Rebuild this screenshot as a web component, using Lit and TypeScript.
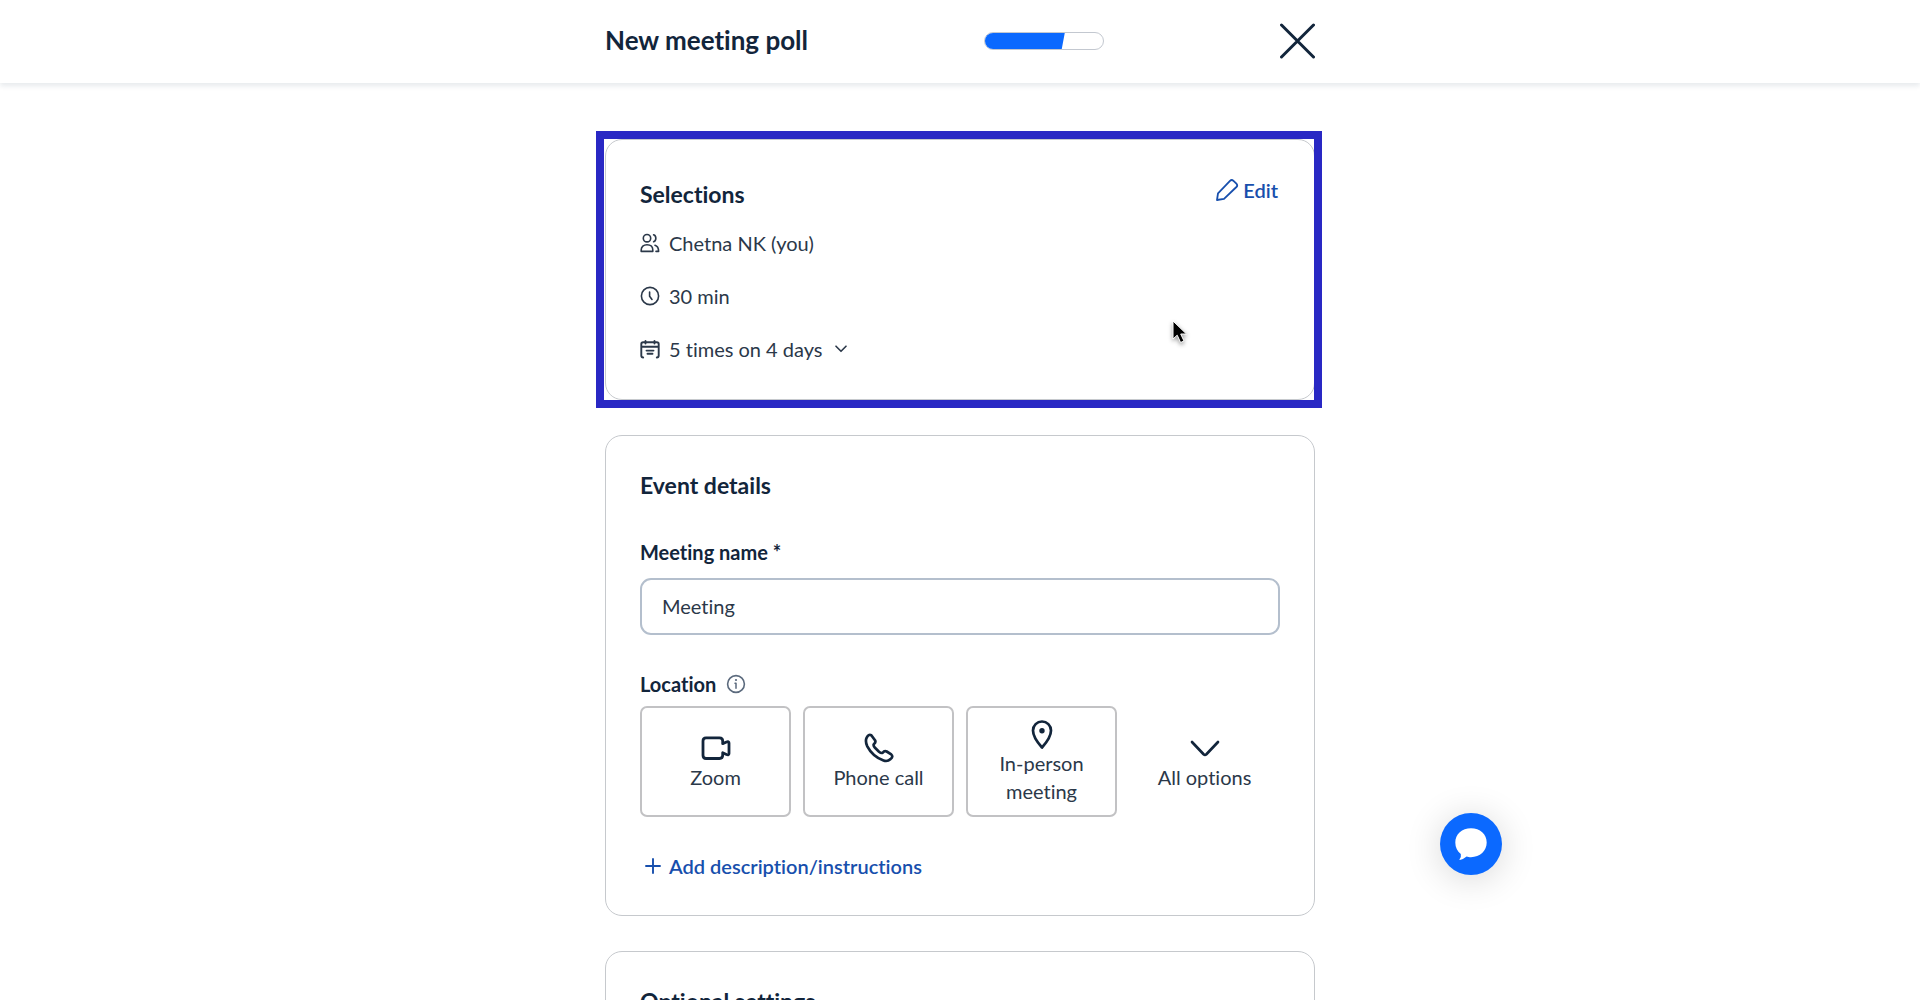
import { LitElement, html, css, svg } from "lit";
import { customElement, state } from "lit/decorators.js";

const icons = {
  close: svg`<svg class="icon" width="36" height="36" viewBox="0 0 36 36"><path d="M2.500 2 34.500 34M34.500 2 2.500 34" stroke-width="3"/></svg>`,
  edit: svg`<svg class="icon" width="24" height="24" viewBox="0 0 24 24"><path d="M2 22 3 15.4 15 2.8Q16.7 1.200 18.500 2.800L21.400 5.700Q23 7.400 21.400 9L9 20.800Z" stroke-width="1.8"/></svg>`,
  people: svg`<svg class="icon" width="20" height="20" viewBox="0 0 20 20"><circle cx="7" cy="5.200" r="3.700"/><path d="M1.200 18.400V17C1.200 13.700 3.600 11.800 7 11.800S12.800 13.700 12.800 17V18.400ZM13.600 1.700C16.600 2.700 16.600 7.700 13.600 8.700M15 12.200C17.700 13 18.600 15 18.600 18.400H16"/></svg>`,
  clock: svg`<svg class="icon" width="20" height="20" viewBox="0 0 20 20"><circle cx="10" cy="10" r="8.600"/><path d="M9.600 6V10.300L12 13.400"/></svg>`,
  calendar: svg`<svg class="icon" width="20" height="20" viewBox="0 0 20 20"><path d="M3.200 18.500Q1.300 18.500 1.300 16.500V5Q1.300 3.200 3.200 3.200H16.800Q18.700 3.200 18.700 5V16.500Q18.700 18.500 16.800 18.500M1.300 7.800H18.700M5.500 2V4.500M14.500 2V4.500M6.500 11.600H13.500M7.500 14.800H12.500" stroke-width="1.900"/></svg>`,
  down: svg`<svg class="icon" width="12" height="8" viewBox="0 0 12 8"><path d="M1 1.200 6 6.300 11 1.200"/></svg>`,
  info: svg`<svg class="icon" width="20" height="20" viewBox="0 0 20 20"><circle cx="10" cy="10" r="8.400"/><path d="M9 9.300H10V14.200" stroke-width="1.500"/><circle cx="10" cy="6" r="1.100" fill="currentColor" stroke="none"/></svg>`,
  video: svg`<svg class="icon" width="30" height="30" viewBox="0 0 30 30"><path d="M5 4.800H18.500Q21.700 4.800 21.700 8V10.700L25.500 9Q28 8 28 10V20.500Q28 22.500 25.500 21.500L21.700 19.800V22.300Q21.700 25.500 18.500 25.500H5Q2 25.500 2 22.300V8Q2 4.800 5 4.800Z" stroke-width="2.800"/></svg>`,
  phone: svg`<svg class="icon" width="30" height="30" viewBox="0 0 30 30"><path d="M2.600 4.800Q4.500.800 7.300 2.200L11 7.300Q12.200 9.300 9.800 11.200Q9 12.600 11 14.800L15 18.700Q17.300 20.600 18.700 19.700Q20.400 17.300 22.700 18.500L27.200 21.400Q29.600 23.700 26.600 26Q23.500 29 19.500 27.500Q8.500 23.300 3.300 13.300Q1 8.500 2.600 4.800Z" stroke-width="2.700"/></svg>`,
  pin: svg`<svg class="icon" width="30" height="30" viewBox="0 0 30 30"><path d="M15 28.500Q6 18.500 6 11.500A9 9 0 0 1 24 11.500Q24 18.500 15 28.500Z" stroke-width="2.700"/><circle cx="15" cy="11.800" r="2.700" fill="currentColor" stroke="none"/></svg>`,
  bigDown: svg`<svg class="icon" width="30" height="30" viewBox="0 0 30 30"><path d="M2 9 13.600 21.200Q15 22.500 16.400 21.200L28 9" stroke-width="2.700"/></svg>`,
  plus: svg`<svg class="icon" width="16" height="16" viewBox="0 0 16 16"><path d="M8 1V15M1 8H15" stroke-width="1.900"/></svg>`,
  chat: svg`<svg width="32" height="32" viewBox="0 0 32 32"><path fill="#fff" d="M16 .300C25 .300 31.700 6.200 31.700 14.600S25 29.200 16 29.200C14.200 29.200 13 29 11.600 28.500Q8 31.500 4.800 32Q4 31.600 4.700 30.900Q6.400 29 5.800 26C2.300 23.500.300 19.500.300 14.600.300 6.200 7 .300 16 .300Z"/></svg>`,
};

@customElement("app-root")
export class AppRoot extends LitElement {
  @state() private meetingName = "Meeting";

  static styles = css`
    :host { display: block; position: relative; height: 100vh; overflow: hidden; background: #fff;
      color: #12253b; font: 20px/28px Lato, "Open Sans", sans-serif; font-variant-ligatures: none; }
    * { box-sizing: border-box; }
    h1, h2, ul { margin: 0; padding: 0; }
    button { font: inherit; font-variant-ligatures: none; color: inherit; background: none; border: 0; padding: 0; cursor: pointer; }
    .icon { display: block; flex: none; fill: none; stroke: currentColor; stroke-width: 1.600; stroke-linecap: round; stroke-linejoin: round; }
    .column { width: 100%; max-width: 710px; margin: 0 auto; }
    .header { background: #fff; box-shadow: 0 3px 5px rgba(18, 45, 80, 0.1); }
    .bar { display: flex; justify-content: space-between; align-items: center; height: 83px; padding-bottom: 1px; }
    .title { font-size: 26px; line-height: 32px; font-weight: 700; padding-bottom: 3px; }
    .progress { width: 120px; height: 18px; border: 1px solid #c3c8d0; border-radius: 9px; overflow: hidden; }
    .fill { height: 100%; background: #0b69ff; clip-path: polygon(0 0, 100% 0, calc(100% - 3px) 100%, 0 100%); }
    .main { display: flex; flex-direction: column; gap: 35px; padding-top: 56px; }
    .card { position: relative; border: 1px solid #c6c9cd; border-radius: 17px; padding: 34px; }
    .heading { font-size: 23px; line-height: 30px; font-weight: 700; }
    .highlight { position: absolute; inset: -9px -8px -9px -10px; border: 8px solid #2928c4; pointer-events: none; }
    .top { display: flex; justify-content: space-between; align-items: start; padding-right: 2px; }
    .top .heading { padding-top: 5px; }
    .link { display: flex; align-items: center; gap: 6px; color: #174fad; font-weight: 600; }
    .top .link { padding-top: 2px; gap: 4px; }
    .list { list-style: none; display: flex; flex-direction: column; gap: 25px; padding: 20px 0 2px; }
    .row { display: flex; align-items: center; gap: 9px; color: #2b3849; }
    .toggle { display: flex; align-items: center; gap: 12px; }
    .label { display: block; font-weight: 700; padding-top: 38px; }
    .field { display: block; width: 100%; height: 57px; margin-top: 12px; padding: 0 20px 2px; border: 2px solid #b4bfcd;
      border-radius: 11px; background: #fff; color: #2b3849; font: inherit; font-variant-ligatures: none; outline: none; }
    .location { display: flex; align-items: center; gap: 10px; font-weight: 700; padding-top: 35px; }
    .info { color: #5b6a7d; }
    .tiles { display: grid; grid-template-columns: repeat(4, 1fr); gap: 12px; margin-top: 8px; }
    .tile { display: flex; flex-direction: column; align-items: center; justify-content: center; height: 111px; padding: 0 20px;
      border: 2px solid #c2c2c4; border-radius: 7px; color: #12253b; }
    .plain { border-color: transparent; }
    .text { color: #2b3849; }
    .add { margin: 35px 0 1px 5px; gap: 8px; }
    .chat { position: absolute; top: 813px; left: calc(50% + 480px); width: 62px; height: 62px; border-radius: 50%;
      display: grid; place-items: center; background: #0b69ff; box-shadow: 0 4px 36px rgba(0, 0, 0, 0.16); }
    .cursor { position: absolute; top: 180px; right: 126px; filter: drop-shadow(0 2px 2px rgba(0, 0, 0, 0.4)); }
  `;

  private tile(icon: unknown, label: string, extra = "") {
    return html`<button class="tile ${extra}" type="button">${icon}<span class="text">${label}</span></button>`;
  }

  render() {
    return html`
      <header class="header">
        <div class="column bar">
          <h1 class="title">New meeting poll</h1>
          <div class="progress" role="progressbar" aria-label="Progress" aria-valuenow="68">
            <div class="fill" style="width: 68%"></div>
          </div>
          <button class="close" type="button" aria-label="Close">${icons.close}</button>
        </div>
      </header>
      <main class="column main">
        <section class="card">
          <div class="top">
            <h2 class="heading">Selections</h2>
            <button class="link" type="button">${icons.edit}Edit</button>
          </div>
          <ul class="list">
            <li class="row">${icons.people}<span>Chetna NK (you)</span></li>
            <li class="row">${icons.clock}<span>30 min</span></li>
            <li class="row">${icons.calendar}<button class="toggle" type="button">5 times on 4 days ${icons.down}</button></li>
          </ul>
          <div class="highlight"></div>
          <svg class="cursor" width="16" height="24" viewBox="0 0 16 24">
            <path d="M1 1V19L5.200 15.200 8.600 22.500 12 21 8.700 14H14.500Z" fill="#000" stroke="#fff" stroke-width="1"/>
          </svg>
        </section>
        <section class="card">
          <h2 class="heading">Event details</h2>
          <label class="label" for="name">Meeting name *</label>
          <input class="field" id="name" type="text" required .value=${this.meetingName}
            @input=${(e: Event) => (this.meetingName = (e.target as HTMLInputElement).value)} />
          <div class="location"><span id="location">Location</span><span class="info">${icons.info}</span></div>
          <div class="tiles" role="group" aria-labelledby="location">
            ${this.tile(icons.video, "Zoom")}
            ${this.tile(icons.phone, "Phone call")}
            ${this.tile(icons.pin, "In-person meeting")}
            ${this.tile(icons.bigDown, "All options", "plain")}
          </div>
          <button class="link add" type="button">${icons.plus}Add description/instructions</button>
        </section>
        <section class="card">
          <h2 class="heading">Optional settings</h2>
        </section>
      </main>
      <button class="chat" type="button" aria-label="Open chat">${icons.chat}</button>
    `;
  }
}
